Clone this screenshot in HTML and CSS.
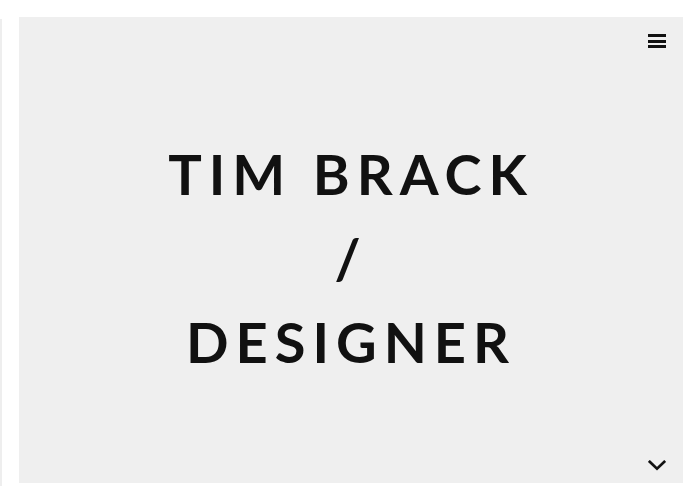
FILE: index.html
```html
<!DOCTYPE html>
<html lang="en">
<head>
<meta charset="utf-8">
<title>Tim Brack / Designer</title>
<link rel="stylesheet" href="styles.css">
</head>
<body>
<div class="page">
  <div class="edge"></div>
  <section class="hero">
    <header class="hero-top">
      <button class="menu" aria-label="Menu">
        <span class="bar"></span><span class="bar"></span><span class="bar"></span>
      </button>
    </header>
    <main class="hero-main">
      <h1 class="title">TIM BRACK<br>/<br>DESIGNER</h1>
    </main>
    <footer class="hero-bottom">
      <svg class="chevron" width="18" height="11" viewBox="0 0 18 11" aria-hidden="true">
        <path d="M1.8 1.8 L9 8.6 L16.2 1.8" fill="none" stroke="#111" stroke-width="2.6" stroke-linecap="square"/>
      </svg>
    </footer>
  </section>
</div>
</body>
</html>
```
FILE: styles.css
```css
html, body {
  margin: 0;
  padding: 0;
  background: #ffffff;
}
body {
  font-family: Lato, "Open Sans", sans-serif;
  width: 700px;
  height: 500px;
  overflow: hidden;
}
.page {
  display: flex;
  align-items: flex-start;
}
.edge {
  width: 2px;
  height: 467px;
  margin-top: 19px;
  background: #eeeeee;
}
.hero {
  margin-left: 17px;
  margin-top: 17px;
  width: 664px;
  height: 466px;
  background: #efefef;
  display: flex;
  flex-direction: column;
}
.hero-top {
  display: flex;
  justify-content: flex-end;
  padding: 17px 17px 0 0;
  height: 14px;
}
.menu {
  border: 0;
  padding: 0;
  margin: 0;
  background: none;
  width: 18px;
  height: 14px;
  display: flex;
  flex-direction: column;
  justify-content: space-between;
}
.bar {
  display: block;
  width: 18px;
  height: 3px;
  background: #111111;
}
.hero-main {
  flex: 1;
  display: flex;
  align-items: center;
  justify-content: center;
  padding-top: 8px;
}
.title {
  margin: 0;
  font-size: 56px;
  font-weight: 700;
  line-height: 84px;
  letter-spacing: 7px;
  text-align: center;
  color: #111111;
}
.hero-bottom {
  display: flex;
  justify-content: flex-end;
  padding: 0 17px 12px 0;
  height: 11px;
}
.chevron {
  display: block;
}
```
